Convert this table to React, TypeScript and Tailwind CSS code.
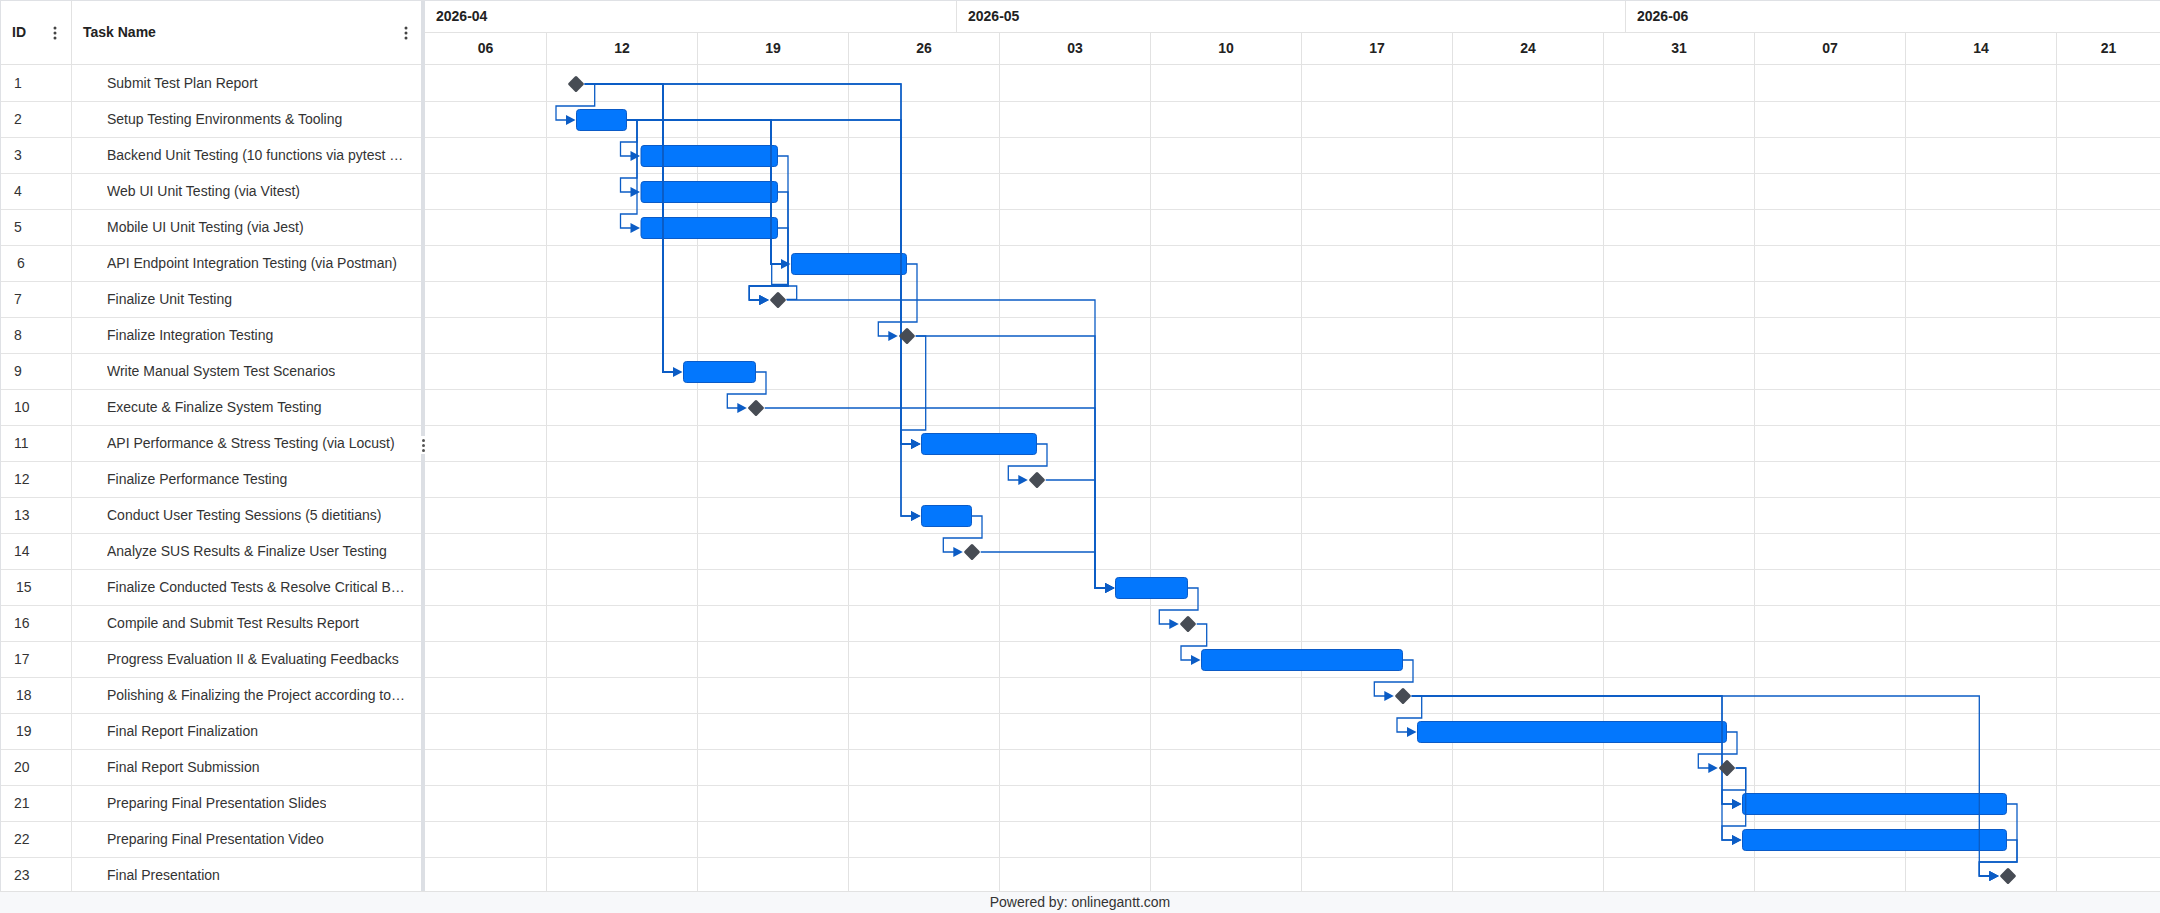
import React from "react";

type Task = { id: number; name: string; s?: number; e?: number; ms?: number };

const tasks: Task[] = [
  { id: 1, name: "Submit Test Plan Report", ms: 576 },
  { id: 2, name: "Setup Testing Environments & Tooling", s: 576, e: 627 },
  { id: 3, name: "Backend Unit Testing (10 functions via pytest …", s: 640.5, e: 778 },
  { id: 4, name: "Web UI Unit Testing (via Vitest)", s: 640.5, e: 778 },
  { id: 5, name: "Mobile UI Unit Testing (via Jest)", s: 640.5, e: 778 },
  { id: 6, name: "API Endpoint Integration Testing (via Postman)", s: 791, e: 907 },
  { id: 7, name: "Finalize Unit Testing", ms: 778 },
  { id: 8, name: "Finalize Integration Testing", ms: 907 },
  { id: 9, name: "Write Manual System Test Scenarios", s: 683, e: 756 },
  { id: 10, name: "Execute & Finalize System Testing", ms: 756 },
  { id: 11, name: "API Performance & Stress Testing (via Locust)", s: 921, e: 1037 },
  { id: 12, name: "Finalize Performance Testing", ms: 1037 },
  { id: 13, name: "Conduct User Testing Sessions (5 dietitians)", s: 921, e: 972 },
  { id: 14, name: "Analyze SUS Results & Finalize User Testing", ms: 972 },
  { id: 15, name: "Finalize Conducted Tests & Resolve Critical B…", s: 1115, e: 1188 },
  { id: 16, name: "Compile and Submit Test Results Report", ms: 1188 },
  { id: 17, name: "Progress Evaluation II & Evaluating Feedbacks", s: 1201, e: 1403 },
  { id: 18, name: "Polishing & Finalizing the Project according to…", ms: 1403 },
  { id: 19, name: "Final Report Finalization", s: 1417, e: 1727 },
  { id: 20, name: "Final Report Submission", ms: 1727 },
  { id: 21, name: "Preparing Final Presentation Slides", s: 1742, e: 2007 },
  { id: 22, name: "Preparing Final Presentation Video", s: 1742, e: 2007 },
  { id: 23, name: "Final Presentation", ms: 2008 },
];

// predecessor -> successor
const links: [number, number][] = [
  [1, 2], [1, 9], [1, 11], [1, 13],
  [2, 3], [2, 4], [2, 5], [2, 6], [2, 11], [2, 13],
  [3, 7], [4, 7], [5, 7],
  [6, 8],
  [7, 15], [8, 11], [8, 15],
  [9, 10], [10, 15],
  [11, 12], [12, 15],
  [13, 14], [14, 15],
  [15, 16], [16, 17], [17, 18],
  [18, 19], [18, 21], [18, 22], [18, 23],
  [19, 20], [20, 21], [20, 22],
  [21, 23], [22, 23],
];

const thick = ["1-9", "2-6"];

const weeks = ["06", "12", "19", "26", "03", "10", "17", "24", "31", "07", "14", "21"];

const idPad: Record<number, string> = { 6: "pl-[16px]", 15: "pl-[15px]", 18: "pl-[15px]", 19: "pl-[15px]" };

const LINE = "#0b5cc5";
const D = 8.7;

const rowTop = (i: number) => 65 + 36 * (i - 1);
const rowMid = (i: number) => rowTop(i) + 19;
const byId = (id: number) => tasks[id - 1];
const outX = (t: Task) => (t.ms !== undefined ? t.ms + D : (t.e as number));
const inX = (t: Task) => (t.ms !== undefined ? t.ms - D : (t.s as number));

function Kebab() {
  return (
    <svg width="4" height="14" viewBox="0 0 4 14" className="fill-[#444]">
      <circle cx="2" cy="2" r="1.5" />
      <circle cx="2" cy="7" r="1.5" />
      <circle cx="2" cy="12" r="1.5" />
    </svg>
  );
}

function Connector({ from, to }: { from: number; to: number }) {
  const p = byId(from);
  const s = byId(to);
  const ox = outX(p);
  const ix = inX(s);
  const py = rowMid(from);
  const sy = rowMid(to);
  const d =
    ix - 20 >= ox + 10
      ? `M${ox},${py} H${ix - 20} V${sy} H${ix - 8}`
      : `M${ox},${py} H${ox + 10} V${rowTop(to) + 5} H${ix - 20} V${sy} H${ix - 8}`;
  const w = thick.includes(`${from}-${to}`) ? 2 : 1.3;
  return (
    <g>
      <path d={d} fill="none" stroke={LINE} strokeWidth={w} />
      <polygon points={`${ix - 10},${sy - 5} ${ix - 0.5},${sy} ${ix - 10},${sy + 5}`} fill={LINE} />
    </g>
  );
}

function Chart() {
  return (
    <svg
      className="absolute left-0 top-0"
      width="1735"
      height="828"
      viewBox="425 65 1735 828"
    >
      {tasks
        .filter((t) => t.ms === undefined)
        .map((t) => (
          <rect
            key={t.id}
            x={(t.s as number) + 0.5}
            y={rowTop(t.id) + 8.5}
            width={(t.e as number) - (t.s as number) - 1}
            height={21}
            rx={3}
            fill="#0377fd"
            stroke="#0b5bc7"
            strokeWidth={1}
          />
        ))}
      {links.map(([a, b]) => (
        <Connector key={`${a}-${b}`} from={a} to={b} />
      ))}
      {/* stray segments around milestone 7 */}
      <path d="M771.7,264 V284.5 H787.5" fill="none" stroke={LINE} strokeWidth={1.3} />
      <path d="M786.4,299.3 H796.7 V286 H788" fill="none" stroke={LINE} strokeWidth={1.3} />
      {tasks
        .filter((t) => t.ms !== undefined)
        .map((t) => (
          <rect
            key={t.id}
            x={(t.ms as number) - 6}
            y={rowMid(t.id) - 6}
            width={12}
            height={12}
            rx={1.5}
            fill="#474c54"
            transform={`rotate(45 ${t.ms} ${rowMid(t.id)})`}
          />
        ))}
    </svg>
  );
}

function WeekCells({ withText }: { withText: boolean }) {
  return (
    <>
      {weeks.map((w, i) => (
        <div
          key={i}
          className={`${i === 0 ? "w-[122px]" : i === weeks.length - 1 ? "flex-1" : "w-[151px]"} shrink-0 h-full ${i === weeks.length - 1 ? "" : "border-r"} border-[#e2e2e2] flex items-center justify-center`}
        >
          {withText ? w : null}
        </div>
      ))}
    </>
  );
}

export default function App() {
  return (
    <div className="w-[2160px] h-[913px] flex flex-col bg-white font-['Liberation_Sans',Arial,sans-serif] text-[14px] text-[#333] overflow-hidden">
      <div className="flex h-[891px] border-t border-l border-[#dfe1e5] overflow-hidden">
        {/* task grid */}
        <div className="w-[420px] shrink-0 flex flex-col">
          <div className="h-[64px] shrink-0 flex border-b border-[#e2e2e2] font-bold text-[#222]">
            <div className="w-[71px] border-r border-[#e2e2e2] flex items-center justify-between pl-[11px] pr-[14px]">
              <span>ID</span>
              <Kebab />
            </div>
            <div className="flex-1 flex items-center justify-between pl-[11px] pr-[13px]">
              <span>Task Name</span>
              <Kebab />
            </div>
          </div>
          {tasks.map((t) => (
            <div
              key={t.id}
              className={`${t.id === 1 ? "h-[37px]" : "h-[36px]"} shrink-0 flex border-b border-[#e4e4e4]`}
            >
              <div className={`w-[71px] border-r border-[#e4e4e4] flex items-center ${idPad[t.id] ?? "pl-[13px]"}`}>
                {t.id}
              </div>
              <div className="flex-1 min-w-0 flex items-center pl-[35px] pr-[12px]">
                <span className="truncate">{t.name}</span>
              </div>
            </div>
          ))}
        </div>

        {/* splitter */}
        <div className="w-[4px] shrink-0 bg-[#dcdfe4] relative">
          <div className="absolute left-0 top-[435px] w-[4px] h-[18px] bg-white flex flex-col items-center justify-center gap-[2px]">
            <span className="block w-[3px] h-[3px] rounded-full bg-[#555]" />
            <span className="block w-[3px] h-[3px] rounded-full bg-[#555]" />
            <span className="block w-[3px] h-[3px] rounded-full bg-[#555]" />
          </div>
        </div>

        {/* timeline */}
        <div className="flex-1 flex flex-col min-w-0">
          <div className="h-[64px] shrink-0 flex flex-col border-b border-[#e2e2e2] font-bold text-[#222]">
            <div className="h-[32px] shrink-0 flex border-b border-[#e2e2e2]">
              <div className="w-[532px] border-r border-[#e2e2e2] flex items-center pl-[11px]">2026-04</div>
              <div className="w-[669px] border-r border-[#e2e2e2] flex items-center pl-[11px]">2026-05</div>
              <div className="flex-1 flex items-center pl-[11px]">2026-06</div>
            </div>
            <div className="flex-1 flex">
              <WeekCells withText />
            </div>
          </div>
          <div className="relative flex-1 overflow-hidden">
            {tasks.map((t) => (
              <div
                key={t.id}
                className={`${t.id === 1 ? "h-[37px]" : "h-[36px]"} flex border-b border-[#e4e4e4]`}
              >
                <WeekCells withText={false} />
              </div>
            ))}
            <Chart />
          </div>
        </div>
      </div>
      <div className="h-[22px] shrink-0 bg-[#f7f8fa] border-t border-[#e2e2e2] flex items-center justify-center text-[#333]">
        Powered by: onlinegantt.com
      </div>
    </div>
  );
}
